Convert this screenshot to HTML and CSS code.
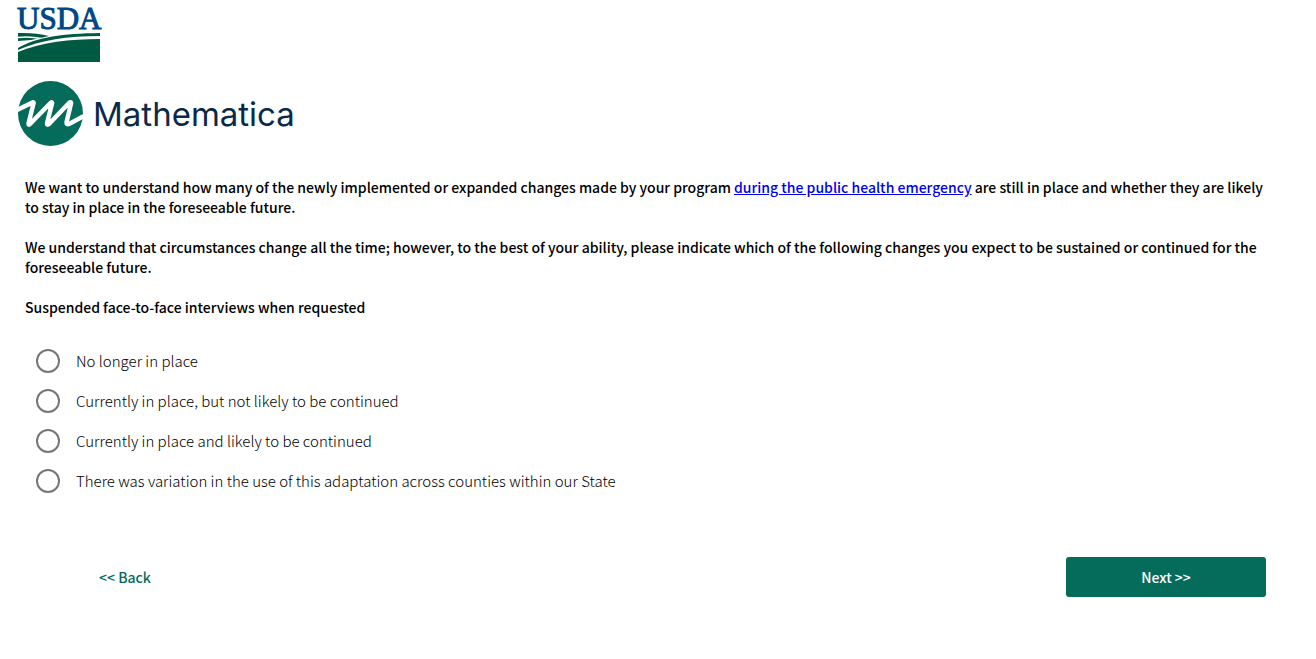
FILE: index.html
```html
<!DOCTYPE html>
<html lang="en">
<head>
  <meta charset="utf-8">
  <meta name="viewport" content="width=device-width, initial-scale=1">
  <title>Survey</title>
  <link rel="stylesheet" href="styles.css">
</head>
<body>
  <header class="logos">
    <svg class="usda-logo" width="90" height="60" viewBox="0 0 90 60" role="img" aria-label="USDA">
      <text class="usda-text" x="0" y="26">USDA</text>
      <path fill="#005941" d="M1 30 C12 29.500 23 30.500 32 33 C26 34.500 20 35.500 14 37 L1 38 Z" />
      <path fill="none" stroke="#fff" stroke-width="1.500" d="M1 34.500 C9 33.500 17 34 24 35.500" />
      <path fill="#005941" d="M1 45 C20 34 46 30.500 83 30 L83 33 C50 33 24 37 1 47 Z" />
      <path fill="#005941" d="M1 49 C26 39 52 36 83 36 L83 59 L1 59 Z" />
    </svg>
    <div class="brand">
      <svg width="66" height="66" viewBox="0 0 66 66" aria-hidden="true">
        <circle cx="33.500" cy="32.500" r="32.500" fill="#056b5b" />
        <path fill="none" stroke="#fff" stroke-width="4.500" stroke-linecap="round" stroke-linejoin="round" d="M0 29 L15.500 21.500 Q17 21 16.500 22.500 L11.500 42.500 Q11.500 44.500 13 43 L33.500 22 Q35.500 20.500 35 22.500 L30 42.500 Q30 44.500 32 43 L52.500 21.500 Q54.500 20.500 54 22.500 L49.500 41.500 Q49.500 44 52 43 L66 35.500" />
      </svg>
      <span class="brand-name">Mathematica</span>
    </div>
  </header>

  <form class="survey">
    <div class="question" id="question">
      <p>We want to understand how many of the newly implemented or expanded changes made by your program <a href="#">during the public health emergency</a> are still in place and whether they are likely to stay in place in the foreseeable future.</p>
      <p>We understand that circumstances change all the time; however, to the best of your ability, please indicate which of the following changes you expect to be sustained or continued for the foreseeable future.</p>
      <p>Suspended face-to-face interviews when requested</p>
    </div>

    <div class="options" role="radiogroup" aria-labelledby="question">
      <label class="option"><input type="radio" name="status" value="1"><span>No longer in place</span></label>
      <label class="option"><input type="radio" name="status" value="2"><span>Currently in place, but not likely to be continued</span></label>
      <label class="option"><input type="radio" name="status" value="3"><span>Currently in place and likely to be continued</span></label>
      <label class="option"><input type="radio" name="status" value="4"><span>There was variation in the use of this adaptation across counties within our State</span></label>
    </div>

    <div class="buttons">
      <button type="button" class="back">&lt;&lt; Back</button>
      <button type="submit" class="next">Next &gt;&gt;</button>
    </div>
  </form>
</body>
</html>
```
FILE: styles.css
```css
body {
  margin: 0;
  background-color: white;
  color: black;
  font-family: "Noto Sans CJK SC", "Open Sans", sans-serif;
  font-size: 14px;
}

.logos {
  padding: 3px 17px 0;
}

.usda-logo {
  display: block;
  overflow: visible;
}

.usda-text {
  font-family: "Liberation Serif", serif;
  font-size: 31px;
  fill: #004785;
  stroke: #004785;
}

.brand {
  display: flex;
  align-items: center;
  gap: 10px;
  margin-top: 18px;
}

.brand-name {
  color: #0b2949;
  font-family: Inter, sans-serif;
  font-size: 33px;
  line-height: 40px;
}

.survey {
  padding: 30px 50px 62px 25px;
}

.question {
  font-weight: 500;
  line-height: 20px;
}

.question p {
  margin: 0 0 20px;
}

.question a {
  color: #0000ee;
}

.options {
  padding: 4px 11px;
}

.option {
  display: flex;
  align-items: center;
  gap: 16px;
  min-height: 40px;
  font-size: 15px;
  font-weight: 300;
  line-height: 20px;
}

.option input {
  appearance: none;
  flex: none;
  width: 24px;
  height: 24px;
  margin: 0;
  border: 2px solid #767676;
  border-radius: 50%;
}

.option input:checked {
  background: radial-gradient(#056b5b 50%, white 55%);
}

.buttons {
  display: flex;
  justify-content: space-between;
  margin-top: 52px;
}

.buttons button {
  height: 40px;
  border: 0;
  border-radius: 3px;
  font: inherit;
  font-weight: 500;
  cursor: pointer;
}

.back {
  width: 200px;
  background: none;
  color: #056b5b;
}

.next {
  width: 200px;
  background-color: #056b5b;
  color: white;
}
```
